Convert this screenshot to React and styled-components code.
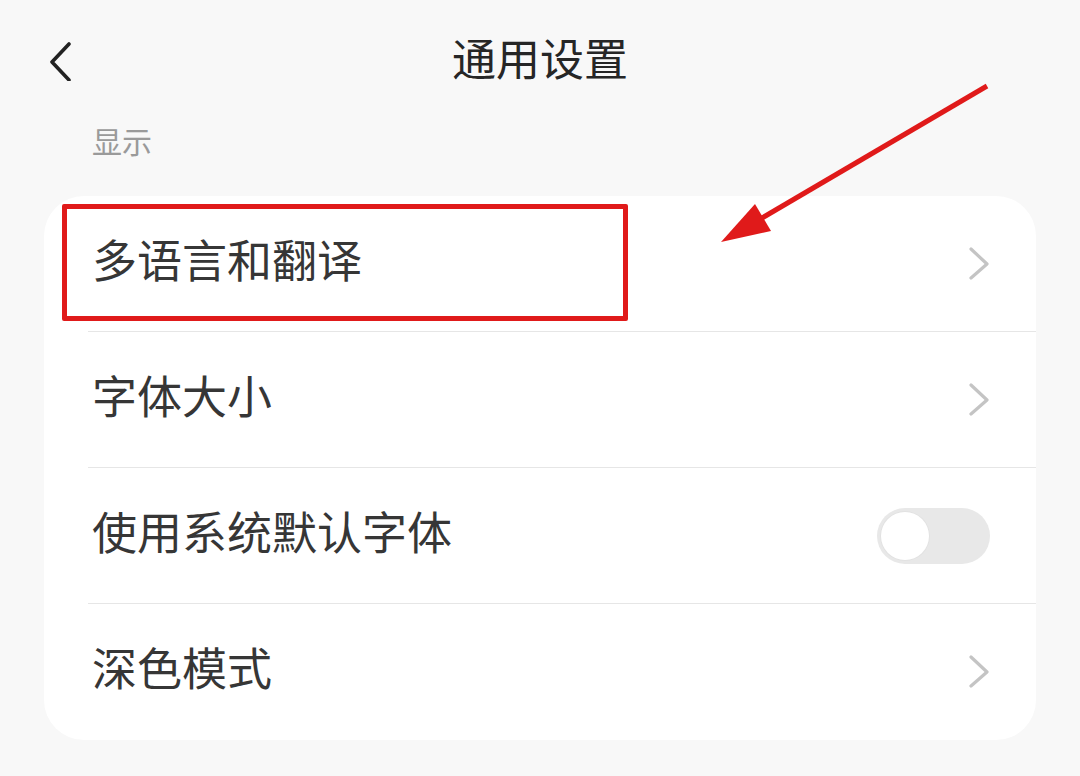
import React, { useState } from "react";
import styled, { createGlobalStyle } from "styled-components";

const GlobalStyle = createGlobalStyle`
  html, body {
    margin: 0;
    padding: 0;
    background: #f8f8f8;
    font-family: "Noto Sans CJK SC", "Noto Sans", sans-serif;
  }
`;

const Page = styled.div`
  position: relative;
  width: 1080px;
  height: 776px;
  overflow: hidden;
  background: #f8f8f8;
`;

const Header = styled.div`
  display: grid;
  grid-template-columns: 1fr auto 1fr;
  align-items: center;
  height: 120px;
  padding: 0 48px;
  box-sizing: border-box;
`;

const BackButton = styled.div`
  display: flex;
  align-items: center;
  margin-top: 2px;
`;

const Title = styled.div`
  font-size: 44px;
  line-height: 50px;
  margin-top: -6px;
  color: #262626;
`;

const SectionLabel = styled.div`
  height: 76px;
  box-sizing: border-box;
  padding: 3px 0 0 92px;
  font-size: 30px;
  line-height: 34px;
  color: #9a9a9a;
`;

const Card = styled.div`
  position: relative;
  margin: 0 44px;
  background: #fff;
  border-radius: 40px;
`;

const Row = styled.div`
  position: relative;
  display: flex;
  align-items: center;
  justify-content: space-between;
  height: 136px;
  padding: 0 46px 0 48px;
  box-sizing: border-box;
  ${(p) =>
    !p.last &&
    `&::after {
      content: "";
      position: absolute;
      left: 44px;
      right: 0;
      bottom: 0;
      height: 1px;
      background: #e6e6e6;
    }`}
`;

const RowText = styled.span`
  font-size: 45px;
  line-height: 52px;
  margin-top: -10px;
  color: #363636;
`;

const Toggle = styled.div`
  width: 113px;
  height: 56px;
  border-radius: 28px;
  background: #e8e8e8;
  display: flex;
  align-items: center;
  padding: 0 4px;
  box-sizing: border-box;
`;

const Knob = styled.div`
  width: 48px;
  height: 48px;
  border-radius: 50%;
  background: #fff;
  box-shadow: 0 0 0 1px #e2e2e2;
`;

const Highlight = styled.div`
  position: absolute;
  left: 18px;
  top: 8px;
  width: 566px;
  height: 117px;
  box-sizing: border-box;
  border: 5px solid #e01a1a;
  border-radius: 2px;
`;

const ArrowLayer = styled.svg`
  position: absolute;
  left: 0;
  top: 0;
  pointer-events: none;
`;

const Chevron = () => (
  <svg width="22" height="34" viewBox="0 0 22 34">
    <path d="M3 2 L19 17 L3 31" fill="none" stroke="#c4c4c4" strokeWidth="3.2" strokeLinecap="round" strokeLinejoin="round" />
  </svg>
);

const items = [
  { label: "多语言和翻译", type: "link" },
  { label: "字体大小", type: "link" },
  { label: "使用系统默认字体", type: "toggle" },
  { label: "深色模式", type: "link" },
];

export default function App() {
  const [systemFont] = useState(false);

  return (
    <Page>
      <GlobalStyle />
      <Header>
        <BackButton>
          <svg width="26" height="40" viewBox="0 0 26 40">
            <path d="M21 3 L4 21 L21 39" fill="none" stroke="#222" strokeWidth="3.6" strokeLinecap="round" strokeLinejoin="round" />
          </svg>
        </BackButton>
        <Title>通用设置</Title>
        <div />
      </Header>
      <SectionLabel>显示</SectionLabel>
      <Card>
        {items.map((item, i) => (
          <Row key={item.label} last={i === items.length - 1}>
            <RowText>{item.label}</RowText>
            {item.type === "toggle" ? (
              <Toggle>
                <Knob style={{ marginLeft: systemFont ? "auto" : 0 }} />
              </Toggle>
            ) : (
              <Chevron />
            )}
          </Row>
        ))}
        <Highlight />
      </Card>
      <ArrowLayer width="1080" height="776" viewBox="0 0 1080 776">
        <line x1="987" y1="86" x2="762" y2="218" stroke="#e01a1a" strokeWidth="5" />
        <polygon points="721,242 755,204 771,231" fill="#e01a1a" />
      </ArrowLayer>
    </Page>
  );
}
